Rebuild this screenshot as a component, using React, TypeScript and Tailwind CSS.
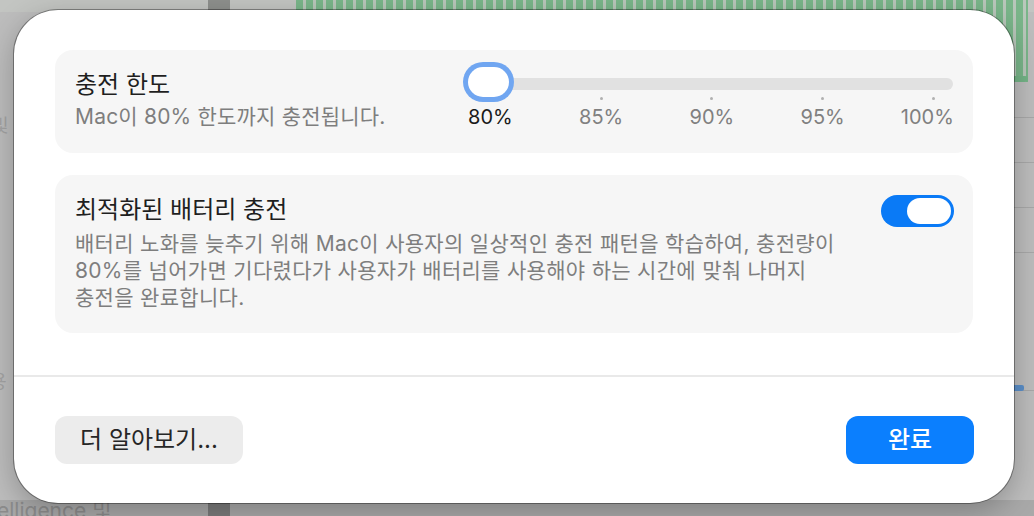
import React from "react";

function Thumb() {
  return (
    <div className="relative z-10 h-[40px] w-[51px] shrink-0 rounded-full bg-[#70a6f1] p-[5px]">
      <div className="h-full w-full rounded-full bg-white" />
    </div>
  );
}

function Slider() {
  const labels = ["80%", "85%", "90%", "95%", "100%"];
  return (
    <div className="flex w-[490px] shrink-0 flex-col pt-[12px]">
      <div className="relative flex h-[40px] items-center">
        <div className="absolute left-[4px] right-0 top-[16px] h-[12px] rounded-full bg-[#e1e1e1]" />
        <Thumb />
      </div>
      <div className="-ml-[28px] -mt-[5px] flex">
        {labels.map((l, i) => (
          <div key={l} className={"flex w-[110.75px] shrink-0 flex-col items-center " + (i === 4 ? "-translate-x-[6px]" : "")}>
            <div className={"h-[3px] w-[3px] rounded-full " + (i === 0 ? "bg-transparent" : (i === 4 ? "translate-x-[6px] bg-[#b0b0b0]" : "bg-[#b0b0b0]"))} />
            <div className={"mt-[5px] text-[20px] leading-[24px] " + (i === 0 ? "text-[#1a1a1a]" : "text-[#808080]")}>{l}</div>
          </div>
        ))}
      </div>
    </div>
  );
}

function Toggle() {
  return (
    <div className="flex h-[32px] w-[73px] shrink-0 items-center justify-end rounded-full bg-[#0a7af6] p-[3px]">
      <div className="h-[26px] w-[44px] rounded-full bg-white" />
    </div>
  );
}

export default function App() {
  return (
    <div className="relative h-[516px] w-[1034px] overflow-hidden bg-[#bdbdbd] font-['Inter','Noto_Sans_CJK_KR',sans-serif]">
      {/* background window remnants */}
      <div className="absolute inset-x-0 top-0 h-[12px] bg-[#c3c5c2]" />
      <div className="absolute bottom-0 inset-x-0 h-[16px] bg-[#a9a9a9]" />
      <div className="absolute left-[208px] top-0 h-[12px] w-[22px] bg-[#8e908d]" />
      <div className="absolute left-[208px] bottom-0 h-[16px] w-[22px] bg-[#7b7b7b]" />
      <div className="absolute left-[296px] top-0 h-[82px] w-[732px] bg-[repeating-linear-gradient(90deg,#7ab68a_0px,#7ab68a_7px,#b9c7bb_7px,#b9c7bb_10px)]" />
      <div className="absolute right-[6px] top-[76px] h-[6px] w-[16px] rounded-[3px] bg-[#74b487]" />
      <div className="absolute right-0 top-[117px] h-[1px] w-[20px] bg-[#a8a8a8]" />
      <div className="absolute right-0 top-[162px] h-[1px] w-[20px] bg-[#a8a8a8]" />
      <div className="absolute right-0 top-[207px] h-[1px] w-[20px] bg-[#a8a8a8]" />
      <div className="absolute right-0 top-[252px] h-[1px] w-[20px] bg-[#a8a8a8]" />
      <div className="absolute right-0 top-[390px] h-[1px] w-[20px] bg-[#a8a8a8]" />
      <div className="absolute right-[10px] top-[385px] h-[6px] w-[12px] rounded-[2px] bg-[#5b8fc9]" />
      <div className="absolute left-[-8px] top-[112px] text-[18px] text-[#a3a3a3]">및</div>
      <div className="absolute left-[-10px] top-[368px] text-[18px] text-[#a3a3a3]">용</div>
      <div className="absolute left-[-3px] top-[495px] text-[21px] text-[#8c8c8c]">elligence 및</div>

      {/* dialog */}
      <div className="relative z-10 pl-[14px] pt-[10px]">
        <div className="flex h-[493px] w-[1000px] flex-col rounded-[44px] bg-white shadow-[0_0_0_1px_rgba(0,0,0,0.35),0_8px_30px_rgba(0,0,0,0.25)]">
          <div className="flex flex-col gap-[22px] px-[41px] pb-[42px] pt-[40px]">
            <div className="flex h-[103px] rounded-[18px] bg-[#f6f6f6] pl-[20px] pr-[20px]">
              <div className="flex flex-1 flex-col pt-[20px]">
                <div className="text-[24px] leading-[30px] text-[#1f1f1f]">충전 한도</div>
                <div className="mt-[3px] text-[21px] leading-[27px] tracking-[0.2px] text-[#7e7e7e]">Mac이 80% 한도까지 충전됩니다.</div>
              </div>
              <Slider />
            </div>
            <div className="flex h-[158px] rounded-[18px] bg-[#f6f6f6] pl-[20px] pr-[19px] pt-[20px]">
              <div className="flex flex-1 flex-col">
                <div className="text-[24px] leading-[30px] text-[#1f1f1f]">최적화된 배터리 충전</div>
                <div className="mt-[5px] text-[21px] leading-[27px] tracking-[0.3px] text-[#7e7e7e]">
                  배터리 노화를 늦추기 위해 Mac이 사용자의 일상적인 충전 패턴을 학습하여, 충전량이
                  <br />
                  80%를 넘어가면 기다렸다가 사용자가 배터리를 사용해야 하는 시간에 맞춰 나머지
                  <br />
                  충전을 완료합니다.
                </div>
              </div>
              <Toggle />
            </div>
          </div>
          <div className="h-[2px] w-full bg-[#e9e9e9]" />
          <div className="flex flex-1 items-start justify-between pl-[41px] pr-[40px] pt-[39px]">
            <button className="flex h-[48px] w-[188px] items-center justify-center rounded-[12px] bg-[#ececec] text-[24px] text-[#262626]">
              더 알아보기...
            </button>
            <button className="flex h-[48px] w-[128px] items-center justify-center rounded-[12px] bg-[#0b7ffe] text-[24px] font-medium text-white">
              완료
            </button>
          </div>
        </div>
      </div>
    </div>
  );
}
